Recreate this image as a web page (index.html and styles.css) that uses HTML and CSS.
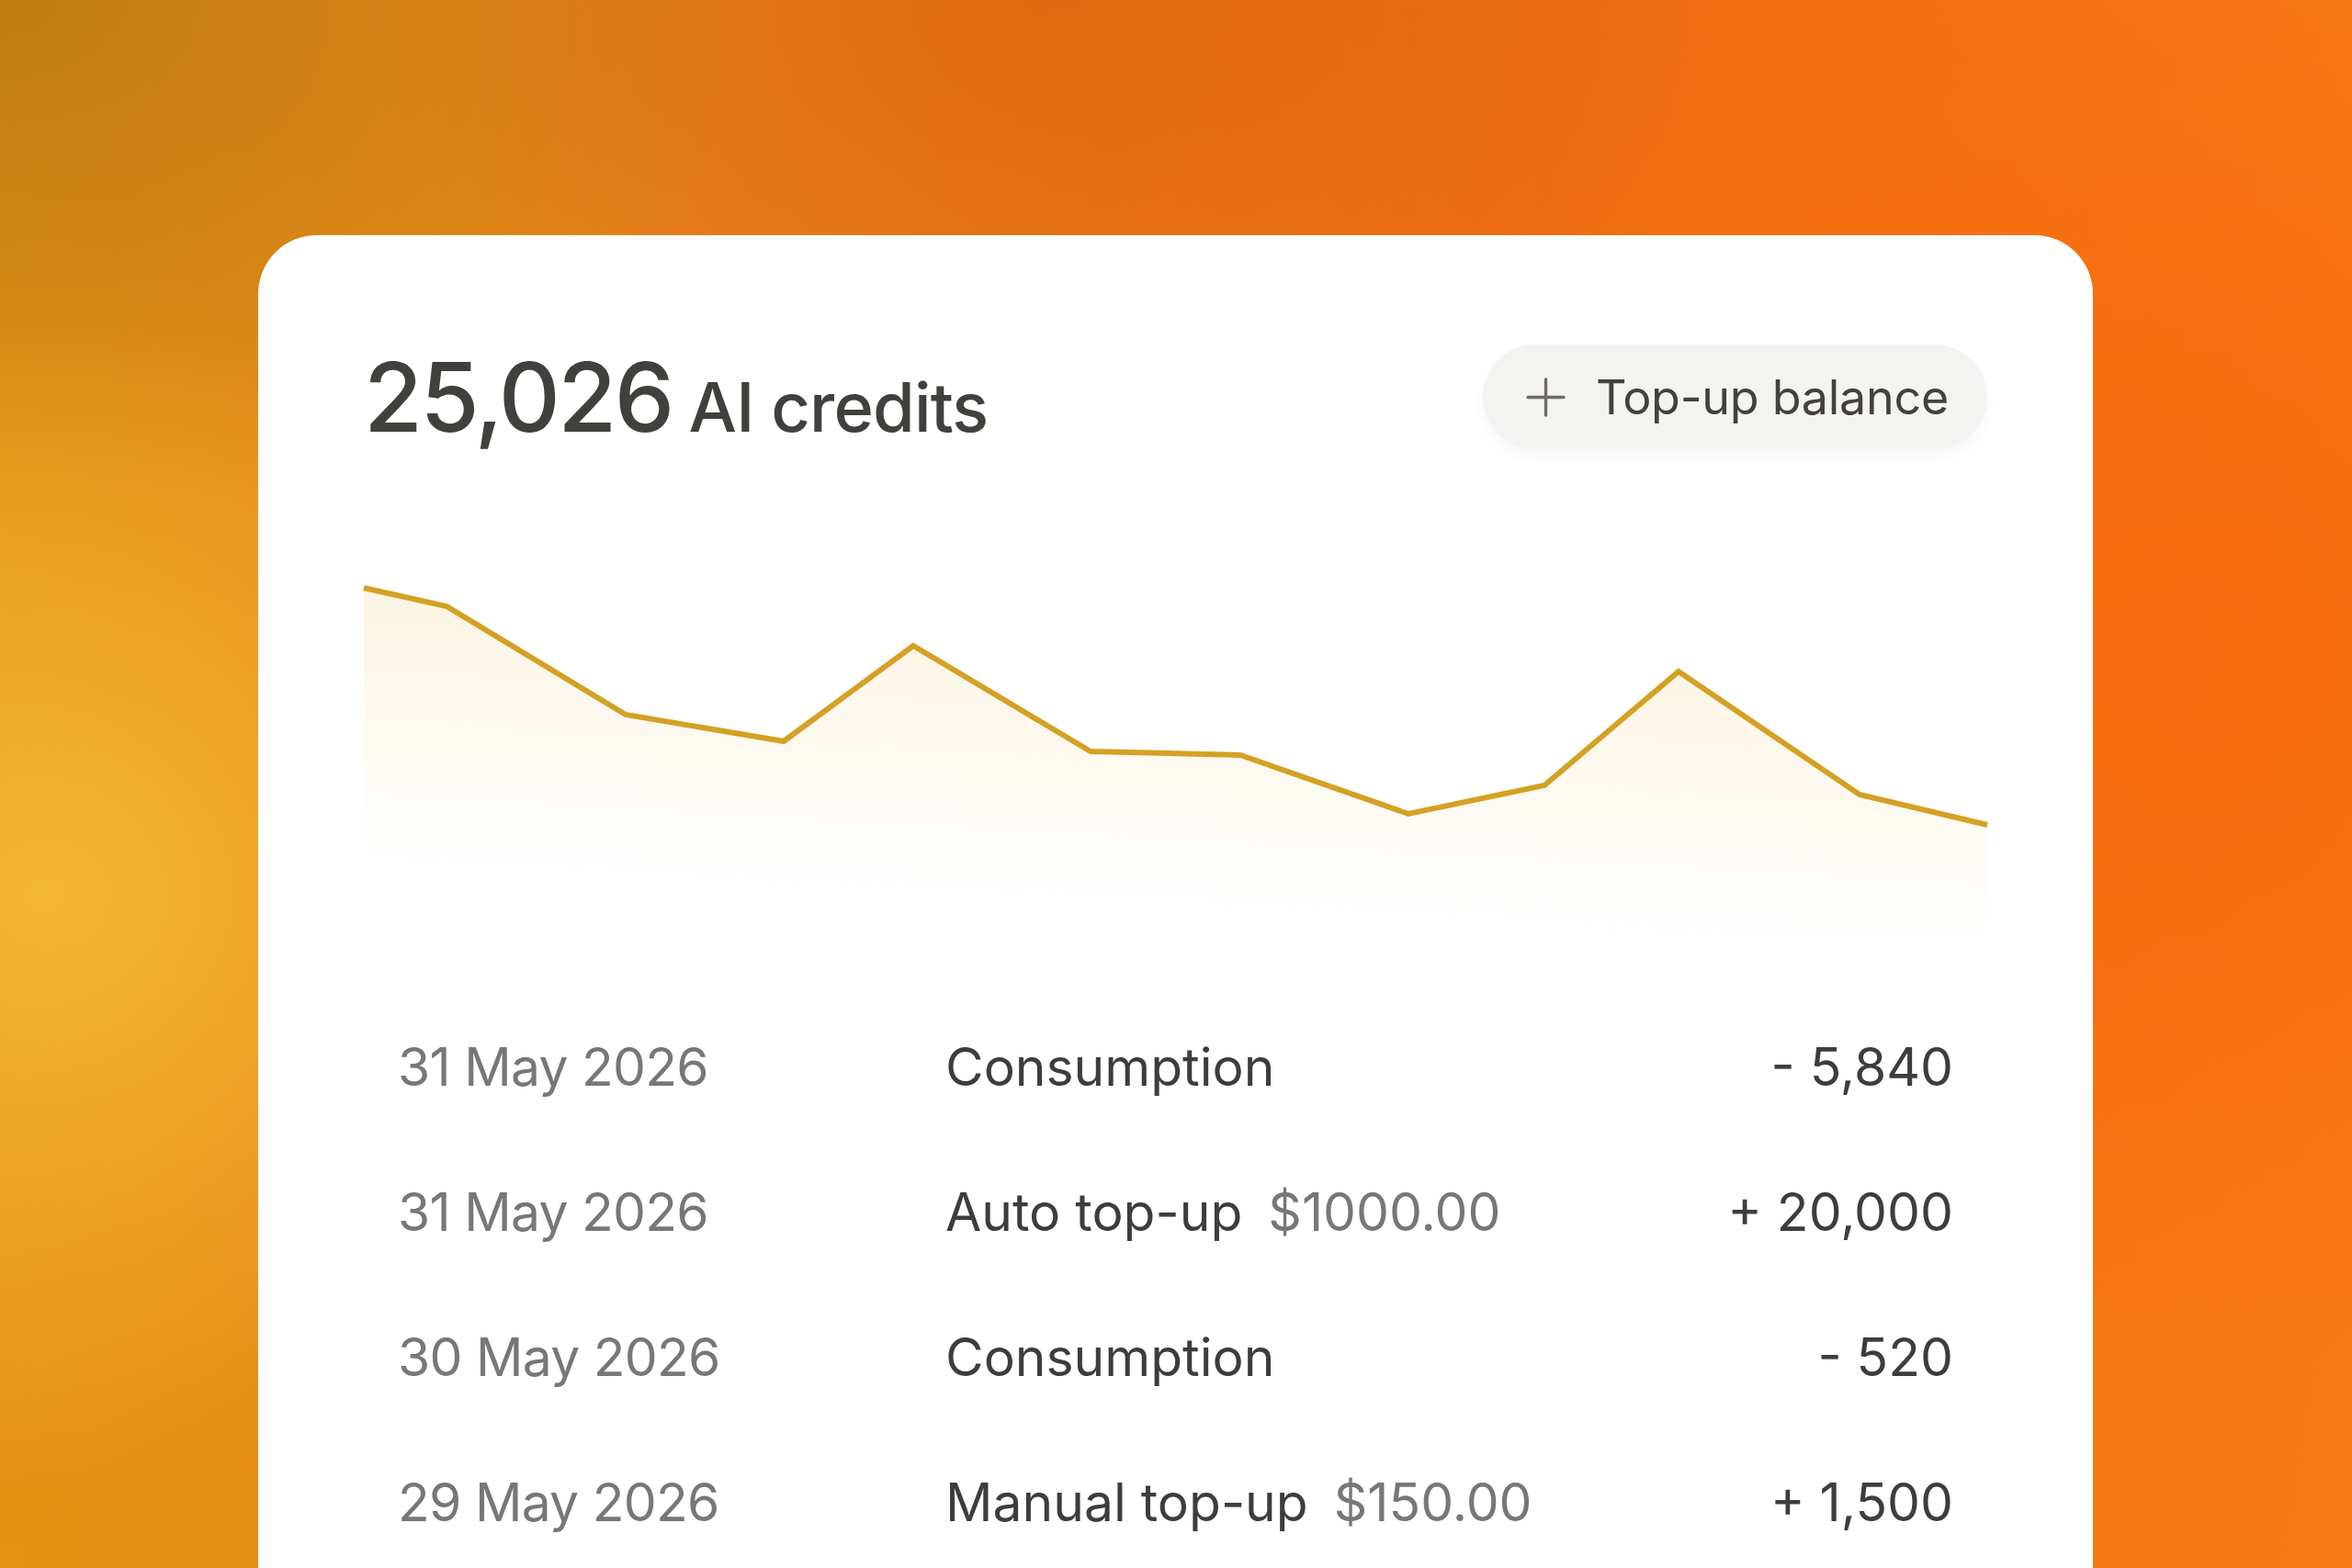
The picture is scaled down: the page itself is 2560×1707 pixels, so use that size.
FILE: index.html
```html
<!DOCTYPE html>
<html lang="en">
<head>
<meta charset="utf-8">
<title>AI credits</title>
<link rel="stylesheet" href="styles.css">
</head>
<body>
<main class="stage">
  <section class="card">
    <header class="card-head">
      <h1 class="balance"><span class="balance-value">25,026</span> <span class="balance-unit">AI credits</span></h1>
      <button class="topup" type="button">
        <svg class="topup-icon" viewBox="0 0 44 44" aria-hidden="true">
          <path d="M22 2v40M2 22h40" />
        </svg>
        <span>Top-up balance</span>
      </button>
    </header>

    <svg class="chart" viewBox="0 0 1767 420" preserveAspectRatio="none" aria-hidden="true">
      <defs>
        <linearGradient id="area" gradientUnits="userSpaceOnUse" x1="900" y1="60" x2="880" y2="420">
          <stop offset="0" stop-color="#f5e2b0" stop-opacity="0.4"/>
          <stop offset="0.55" stop-color="#f7e7bf" stop-opacity="0.2"/>
          <stop offset="1" stop-color="#ffffff" stop-opacity="0"/>
        </linearGradient>
      </defs>
      <polygon class="chart-area" fill="url(#area)"
        points="0,40 90,60 285,178 457,207 598,103 791,218 954,222 1137,286 1285,255 1431,131 1628,265 1767,298 1767,420 0,420"/>
      <polyline class="chart-line"
        points="0,40 90,60 285,178 457,207 598,103 791,218 954,222 1137,286 1285,255 1431,131 1628,265 1767,298"/>
    </svg>

    <ul class="ledger">
      <li class="ledger-row">
        <span class="ledger-date">31 May 2026</span>
        <span class="ledger-desc">Consumption</span>
        <span class="ledger-amount">- 5,840</span>
      </li>
      <li class="ledger-row">
        <span class="ledger-date">31 May 2026</span>
        <span class="ledger-desc">Auto top-up <span class="ledger-money">$1000.00</span></span>
        <span class="ledger-amount">+ 20,000</span>
      </li>
      <li class="ledger-row">
        <span class="ledger-date">30 May 2026</span>
        <span class="ledger-desc">Consumption</span>
        <span class="ledger-amount">- 520</span>
      </li>
      <li class="ledger-row">
        <span class="ledger-date">29 May 2026</span>
        <span class="ledger-desc">Manual top-up <span class="ledger-money">$150.00</span></span>
        <span class="ledger-amount">+ 1,500</span>
      </li>
    </ul>
  </section>
</main>
</body>
</html>
```

FILE: styles.css
```css
* {
  box-sizing: border-box;
}

html,
body {
  margin: 0;
  padding: 0;
  height: 100%;
}

body {
  width: 2560px;
  height: 1707px;
  overflow: hidden;
  font-family: "Inter", "Noto Sans", "Liberation Sans", sans-serif;
  color: #42403d;
}

.stage {
  width: 100%;
  height: 100%;
  padding: 256px 0 0 281px;
  background:
    radial-gradient(ellipse 28% 38% at 2% 57%, rgba(246, 184, 52, 0.95), rgba(246, 184, 52, 0) 100%),
    radial-gradient(ellipse 22% 30% at 0% 100%, rgba(228, 150, 16, 0.8), rgba(228, 150, 16, 0) 100%),
    radial-gradient(ellipse 32% 34% at 0% 0%, rgba(192, 122, 16, 0.95), rgba(192, 122, 16, 0) 100%),
    radial-gradient(ellipse 30% 28% at 45% 0%, rgba(218, 100, 14, 0.75), rgba(218, 100, 14, 0) 100%),
    radial-gradient(ellipse 35% 45% at 92% 42%, rgba(249, 104, 12, 0.85), rgba(249, 104, 12, 0) 100%),
    linear-gradient(100deg, #de9516 0%, #e8801a 30%, #f06d10 60%, #f97a16 100%);
}

.card {
  width: 1997px;
  min-height: 1600px;
  background: #ffffff;
  border-radius: 64px;
  padding: 119px 115px 0;
}

/* Header: balance and top-up action */
.card-head {
  display: flex;
  align-items: center;
  justify-content: space-between;
}

.balance {
  margin: 0;
  display: flex;
  align-items: baseline;
  gap: 18px;
  font-weight: 500;
  line-height: 1;
  color: #42403d;
}

.balance-value {
  font-size: 104px;
  letter-spacing: -0.025em;
}

.balance-unit {
  font-size: 74px;
  letter-spacing: -0.012em;
}

.topup {
  display: flex;
  align-items: center;
  gap: 33px;
  height: 114px;
  padding: 0 42px 0 47px;
  border: none;
  border-radius: 57px;
  background: #f3f3f2;
  box-shadow: 0 8px 14px rgba(0, 0, 0, 0.035);
  font-family: inherit;
  font-size: 52px;
  font-weight: 400;
  color: #44403d;
  letter-spacing: -0.005em;
}

.topup-icon {
  width: 43px;
  height: 43px;
  fill: none;
  stroke: #6f6a66;
  stroke-width: 3.4;
  stroke-linecap: round;
}

/* Balance history chart */
.chart {
  display: block;
  width: 1767px;
  height: 420px;
  margin-top: 111px;
  overflow: visible;
}

.chart-line {
  fill: none;
  stroke: #d4a125;
  stroke-width: 6;
  stroke-linejoin: miter;
  stroke-miterlimit: 3;
}

/* Transaction list */
.ledger {
  list-style: none;
  margin: 63px 0 0;
  padding: 0 37px;
}

.ledger-row {
  display: grid;
  grid-template-columns: 596px 1fr auto;
  align-items: center;
  height: 158px;
  font-size: 57px;
  line-height: 158px;
  font-weight: 400;
}

.ledger-date {
  color: #777777;
  letter-spacing: -0.013em;
}

.ledger-desc {
  color: #3d3d3d;
  white-space: pre;
}

.ledger-money {
  color: #777777;
  margin-left: 12px;
}

.ledger-amount {
  color: #3d3d3d;
  text-align: right;
}
```
